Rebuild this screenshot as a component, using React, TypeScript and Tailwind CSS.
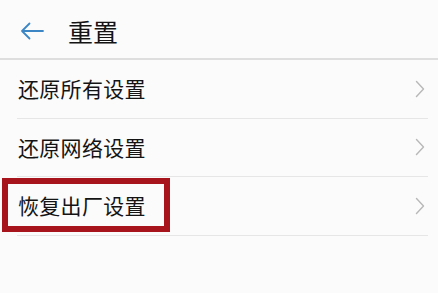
const rows = ["还原所有设置", "还原网络设置", "恢复出厂设置"]

function Chevron() {
  return (
    <svg width="10" height="18" viewBox="0 0 10 18" fill="none">
      <polyline points="1.5,1.5 8.5,9 1.5,16.5" stroke="#b8b8b8" strokeWidth="1.4" strokeLinejoin="round" strokeLinecap="round" />
    </svg>
  )
}

export default function App() {
  return (
    <div
      className="relative h-[293px] w-[438px] overflow-hidden bg-[#fbfbfb] text-[#141414]"
      style={{ fontFamily: '"Noto Sans CJK SC", "Noto Sans", sans-serif' }}
    >
      <div className="flex h-[60px] items-center border-b-2 border-[#dedede] pt-[4px]">
        <svg className="ml-[19px]" width="26" height="18" viewBox="0 0 26 18" fill="none">
          <path d="M24 9H3M10.5 1.5L3 9l7.5 7.5" stroke="#3d86c6" strokeWidth="1.8" strokeLinecap="round" strokeLinejoin="round" />
        </svg>
        <span className="ml-[23px] text-[25px] leading-none">重置</span>
      </div>
      <div className="ml-[17px] mr-[10px]">
        {rows.map((r) => (
          <div key={r} className="flex h-[58.5px] items-center justify-between border-b border-[#e6e6e6] pl-px pr-[3px]">
            <span className="text-[21px] leading-none tracking-[0.3px]">{r}</span>
            <Chevron />
          </div>
        ))}
      </div>
      <div className="absolute left-[2px] top-[178px] h-[54px] w-[168px] border-[6px] border-[#a8141c]" />
    </div>
  )
}
